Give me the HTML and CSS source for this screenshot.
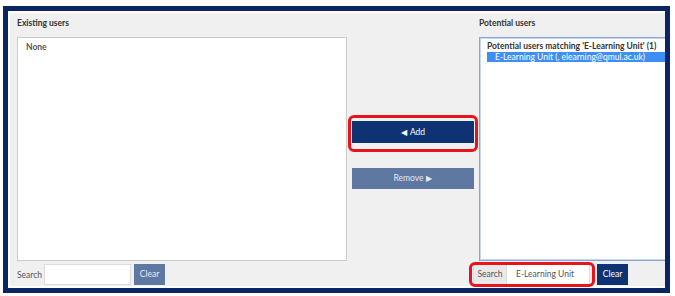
FILE: index.html
```html
<!DOCTYPE html>
<html lang="en">
<head>
    <meta charset="UTF-8">
    <meta name="viewport" content="width=device-width, initial-scale=1.0">
    <title>Enrolled users</title>
    <link rel="stylesheet" href="styles.css">
</head>
<body>
    <div class="frame">
        <div class="panel">
            <div class="label">Existing users</div>
            <div></div>
            <div class="label">Potential users</div>

            <div class="listbox">
                <div class="group">None</div>
            </div>

            <div class="actions">
                <div class="btn add"><span class="arrow left">&#9664;</span>Add</div>
                <div class="btn remove">Remove<span class="arrow right">&#9654;</span></div>
            </div>

            <div class="listbox focused">
                <div class="group dark">Potential users matching 'E-Learning Unit' (1)</div>
                <div class="option selected">E-Learning Unit (, elearning@qmul.ac.uk)</div>
            </div>

            <div class="search">
                <span class="search-label">Search</span>
                <div class="field"></div>
                <div class="btn clear muted">Clear</div>
            </div>
            <div></div>
            <div class="search shifted">
                <span class="addon">Search</span>
                <div class="field joined">E-Learning Unit</div>
                <div class="btn clear">Clear</div>
            </div>
        </div>
    </div>

    <!-- annotation highlights -->
    <div class="mark mark-add"></div>
    <div class="mark mark-search"></div>
</body>
</html>
```

FILE: styles.css
```css
body{
    margin: 0;
    background: #fff;
    font-family: Lato, "Open Sans", sans-serif;
    font-size: 8.5px;
    color: #333;
}
.frame{
    margin: 6px 0 0 3px;
    width: 667px;
    height: 287px;
    box-sizing: border-box;
    border: 5px solid #0b2563;
}
.panel{
    height: 100%;
    box-sizing: border-box;
    border: 2px solid #fff;
    border-right: 0;
    background: #f0f0f0;
    overflow: hidden;
    padding-left: 7px;
    display: grid;
    grid-template-columns: 330px 122px 330px;
    grid-template-rows: 24px 224px 24px;
    column-gap: 5px;
}
.label{
    font-weight: bold;
    line-height: 18px;
    padding-top: 1px;
}
.listbox{
    background: #fff;
    border: 1px solid #ccc;
    padding: 4px 8px;
}
.listbox.focused{
    border-color: #8aa6d8;
    box-shadow: inset 0 0 0 1px #c6d5f0;
    padding: 3px 0 0 7px;
}
.group{
    font-weight: bold;
    color: #555;
    line-height: 11px;
}
.group.dark{
    color: #333;
}
.option{
    line-height: 10px;
    padding-left: 8px;
}
.option.selected{
    background: #3d8ff5;
    color: #fff;
}
.actions{
    padding-top: 84px;
}
.btn{
    color: #fff;
    text-align: center;
    cursor: pointer;
}
.arrow{
    font-size: 8px;
}
.arrow.left{
    margin-right: 3px;
}
.arrow.right{
    margin-left: 3px;
}
.add{
    background: #0e3372;
    height: 22px;
    line-height: 22px;
}
.remove{
    margin-top: 25px;
    background: #5e78a2;
    color: #e4e8f0;
    height: 21px;
    line-height: 21px;
}
.search{
    display: flex;
    align-items: center;
    margin-top: 3px;
    height: 21px;
}
.search.shifted{
    margin-left: -6px;
}
.search-label{
    color: #555;
    width: 27px;
}
.field{
    width: 87px;
    height: 21px;
    box-sizing: border-box;
    background: #fff;
    border: 1px solid #ddd;
    line-height: 19px;
    padding-left: 9px;
    color: #555;
}
.addon{
    height: 21px;
    box-sizing: border-box;
    line-height: 19px;
    width: 34px;
    text-align: center;
    color: #555;
    background: #e9e9e9;
    border: 1px solid #ddd;
}
.field.joined{
    width: 83px;
    border-left: 0;
}
.clear{
    margin-left: 3px;
    width: 31px;
    height: 21px;
    line-height: 21px;
    background: #0e3372;
}
.shifted .clear{
    margin-left: 7px;
}
.clear.muted{
    background: #5e78a2;
    color: #e4e8f0;
}
.mark{
    position: absolute;
    border: 3px solid #e8141b;
    border-radius: 6px;
    box-sizing: border-box;
}
.mark-add{
    left: 348px;
    top: 115px;
    width: 130px;
    height: 37px;
}
.mark-search{
    left: 469px;
    top: 262px;
    width: 126px;
    height: 25px;
}
```
